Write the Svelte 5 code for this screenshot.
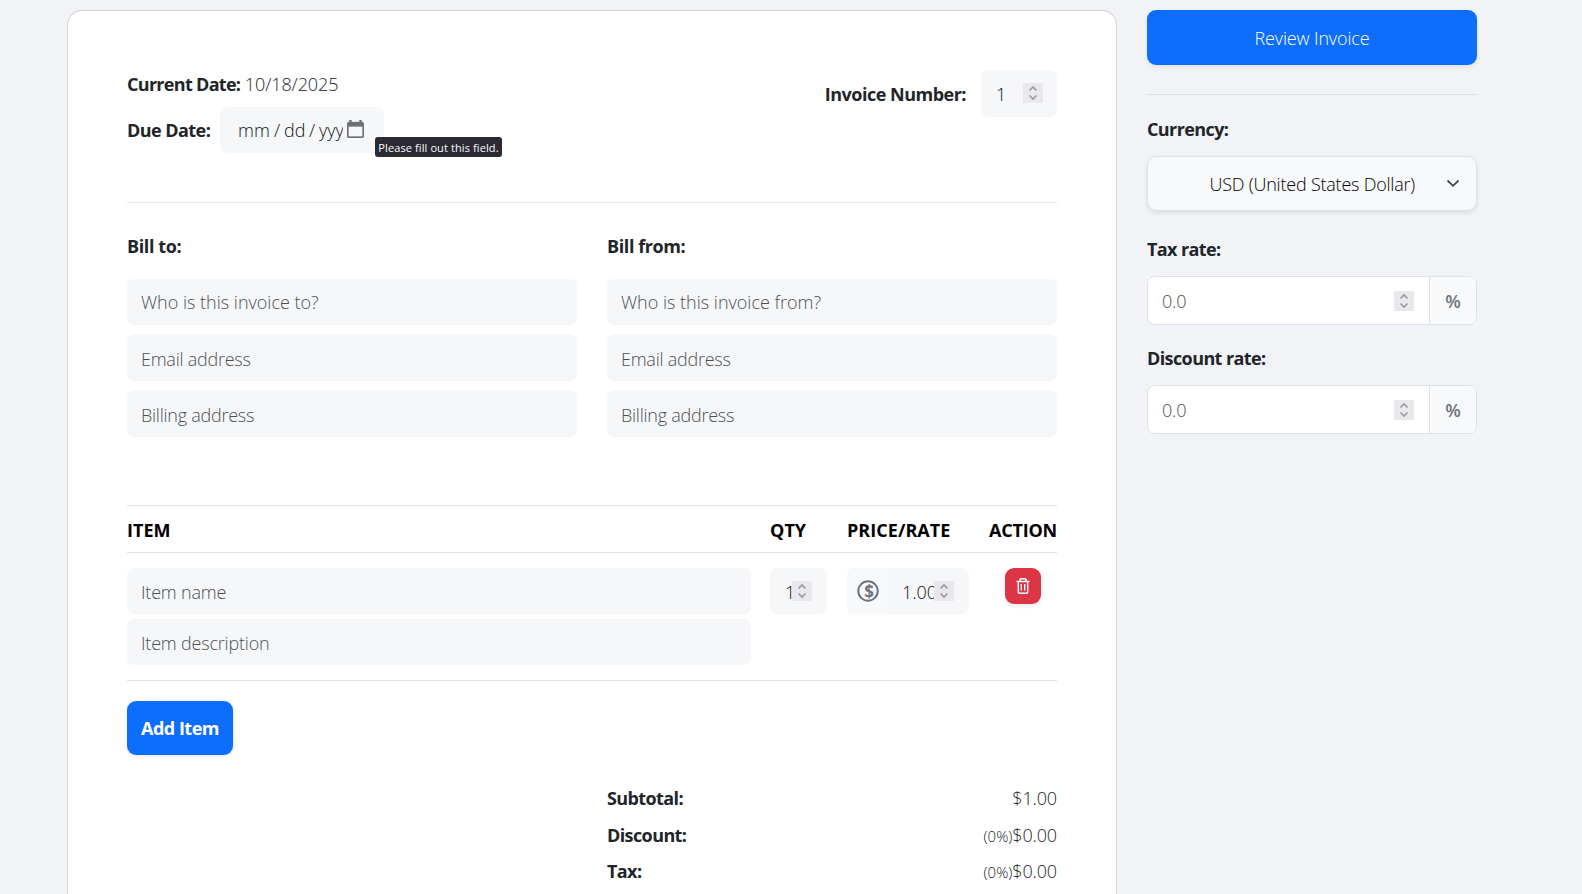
<script lang="ts">
	const parties = [
		{ title: 'Bill to:', name: 'Who is this invoice to?', key: 'to' },
		{ title: 'Bill from:', name: 'Who is this invoice from?', key: 'from' }
	];

	const rates = ['Tax rate:', 'Discount rate:'];

	let invoiceNumber = $state('1');
	let quantity = $state('1');
	let price = $state('1.00');

	const subtotal = $derived((parseFloat(quantity) || 0) * (parseFloat(price) || 0));
	const totals = $derived([
		{ label: 'Subtotal:', rate: '', value: '$' + subtotal.toFixed(2) },
		{ label: 'Discount:', rate: '(0%)', value: '$0.00' },
		{ label: 'Tax:', rate: '(0%)', value: '$0.00' }
	]);
</script>

{#snippet spinner()}
	<svg class="spinner" width="20" height="20" viewBox="0 0 20 20">
		<path d="M6.500 7.500 10 4l3.500 3.500M6.500 12.500 10 16l3.500-3.500" />
	</svg>
{/snippet}

<div class="page">
	<form class="card">
		<div class="top">
			<div>
				<div class="currentDate"><b>Current Date:</b> <span>10/18/2025</span></div>
				<div class="dueDate">
					<b>Due Date:</b>
					<div class="dateBox">
						<div class="dateText"><span class="mm">mm</span><span class="slash">/</span><span class="dd">dd</span><span class="slash">/</span><span class="yy">yyyy</span></div>
						<svg class="calendar" width="17" height="18" viewBox="0 0 17 18">
							<path d="M2.500 0h2v2h8V0h2v2h.5a2 2 0 0 1 2 2v12a2 2 0 0 1-2 2H2a2 2 0 0 1-2-2V4a2 2 0 0 1 2-2h.5zM1.500 6.500v9a1 1 0 0 0 1 1h12a1 1 0 0 0 1-1v-9z" />
						</svg>
						<div class="tooltip">Please fill out this field.</div>
					</div>
				</div>
			</div>
			<div class="invoiceNumber">
				<b>Invoice Number:</b>
				<div class="field numberBox"><input bind:value={invoiceNumber} aria-label="Invoice number" />{@render spinner()}</div>
			</div>
		</div>

		<hr />

		<div class="parties">
			{#each parties as party (party.key)}
				<div class="party">
					<b>{party.title}</b>
					<input class="field" placeholder={party.name} />
					<input class="field tall" placeholder="Email address" />
					<input class="field tall" placeholder="Billing address" />
				</div>
			{/each}
		</div>

		<div class="items">
			<div class="itemGrid itemHead">
				<b class="wide">ITEM</b>
				<b class="wide">QTY</b>
				<b class="wide">PRICE/RATE</b>
				<b>ACTION</b>
			</div>
			<div class="itemGrid itemRow">
				<div class="itemText">
					<input class="field" placeholder="Item name" />
					<input class="field" placeholder="Item description" />
				</div>
				<div class="field qtyBox"><input bind:value={quantity} aria-label="Quantity" />{@render spinner()}</div>
				<div class="field priceBox">
					<div class="prefix">
						<svg width="22" height="22" viewBox="0 0 22 22">
							<circle cx="11" cy="11" r="9.700" />
							<text x="12" y="18">$</text>
						</svg>
					</div>
					<input bind:value={price} aria-label="Price" />{@render spinner()}
				</div>
				<button type="button" class="trash" aria-label="Delete item">
					<svg width="14" height="16" viewBox="0 0 14 16">
						<path d="M.5 3.500h13M4 3.200V1.600Q4 .8 4.800.8h4.400q.8 0 .8.8v1.600M2.300 4v10.200q0 1 1 1h7.400q1 0 1-1V4M5.300 6v6.500M8.700 6v6.500" />
					</svg>
				</button>
			</div>
		</div>

		<button type="button" class="add">Add Item</button>

		<div class="totals">
			{#each totals as total (total.label)}
				<div class="total">
					<b>{total.label}</b>
					<span><small>{total.rate}</small>{total.value}</span>
				</div>
			{/each}
		</div>
	</form>

	<aside>
		<button type="button" class="review">Review Invoice</button>
		<hr />
		<b class="currency">Currency:</b>
		<button type="button" class="select">
			<span>USD (United States Dollar)</span>
			<svg width="14" height="9" viewBox="0 0 14 9"><path d="M1.500 1.500 7 6.800l5.500-5.300" /></svg>
		</button>
		{#each rates as rate (rate)}
			<b class="rateLabel">{rate}</b>
			<div class="rateBox">
				<input placeholder="0.0" aria-label={rate} />{@render spinner()}
				<span class="percent">%</span>
			</div>
		{/each}
	</aside>
</div>

<style>
	:global(body) {
		margin: 0;
		background: #f1f3f7;
	}

	.page {
		display: flex;
		gap: 30px;
		height: 894px;
		padding: 10px 0 0 67px;
		box-sizing: border-box;
		overflow: hidden;
		font-family: "Open Sans", "Noto Sans", sans-serif;
		font-size: 18px;
		font-weight: 300;
		line-height: 27px;
		color: #212529;
	}

	.page * {
		box-sizing: border-box;
	}

	b {
		font-weight: 700;
		letter-spacing: -0.6px;
		white-space: nowrap;
	}

	hr {
		margin: 0;
		border: 0;
		border-top: 1px solid #e4e5e7;
	}

	input {
		min-width: 0;
		border: 0;
		outline: 0;
		background: transparent;
		font: inherit;
		color: #111417;
	}

	input::placeholder {
		color: #4d5053;
		opacity: 1;
	}

	button {
		border: 0;
		font: inherit;
	}

	.card {
		width: 1050px;
		height: 884px;
		flex: none;
		padding: 59px 59px 0;
		border: 1px solid #d0d1d5;
		border-bottom: 0;
		border-radius: 15px 15px 0 0;
		background: #fff;
	}

	.top {
		display: flex;
		justify-content: space-between;
		height: 132px;
	}

	.currentDate {
		margin-top: 1px;
		letter-spacing: -0.1px;
	}

	.currentDate b {
		letter-spacing: -0.7px;
	}

	.dueDate {
		display: flex;
		align-items: center;
		gap: 9px;
		margin-top: 9px;
	}

	.dueDate b {
		width: 84px;
		letter-spacing: -0.55px;
	}

	.dateBox {
		position: relative;
		display: flex;
		align-items: center;
		width: 164px;
		height: 46px;
		padding-left: 18px;
		border-radius: 7px;
		background: #f6f7f9;
	}

	.dateText {
		display: flex;
		width: 105px;
		overflow: hidden;
		color: #111417;
	}

	.dateText span {
		flex: none;
	}

	.mm {
		width: 36px;
	}

	.slash {
		width: 10px;
	}

	.dd {
		width: 25px;
	}

	.calendar {
		margin: -3px 0 0 4px;
		fill: #6c7075;
		fill-rule: evenodd;
	}

	.calendar path {
		stroke: #6c7075;
		stroke-width: 0.3;
	}

	.tooltip {
		position: absolute;
		left: 155px;
		top: 30px;
		width: 127px;
		height: 20px;
		border-radius: 3px;
		background: #2b2a33;
		color: #fbfbfe;
		font-size: 11px;
		font-weight: 400;
		letter-spacing: 0.1px;
		line-height: 21px;
		text-align: center;
		white-space: nowrap;
	}

	.invoiceNumber {
		display: flex;
		align-items: center;
		gap: 15px;
		height: 47px;
	}

	.invoiceNumber b {
		padding-top: 2px;
		letter-spacing: -0.5px;
	}

	.field {
		display: flex;
		align-items: center;
		width: 100%;
		height: 46px;
		padding: 0 14px;
		border-radius: 7px;
		background: #f6f7f9;
	}

	.tall {
		height: 47px;
		padding-top: 2px;
		letter-spacing: -0.25px;
	}

	.spinner {
		flex: none;
		background: #e9e9ed;
		fill: none;
		stroke: #9a99a5;
		stroke-width: 1.7;
	}

	.numberBox {
		width: 76px;
		height: 47px;
		padding: 0 14px 2px 15px;
	}

	.numberBox input {
		width: 27px;
		padding: 4px 0 0;
	}

	.parties {
		display: grid;
		grid-template-columns: 450px 450px;
		gap: 30px;
		padding-top: 30px;
	}

	.party {
		display: flex;
		flex-direction: column;
		gap: 9px;
	}

	.party b {
		margin-bottom: 10px;
		letter-spacing: -0.4px;
	}

	.items {
		margin-top: 68px;
		border-top: 1px solid #dfe1e4;
		border-bottom: 1px solid #dfe1e4;
	}

	.itemGrid {
		display: grid;
		grid-template-columns: 624px 58px 123px 68px;
		column-gap: 19px;
	}

	.itemHead {
		height: 47px;
		padding-top: 11px;
		border-bottom: 1px solid #dfe1e4;
		color: #000;
	}

	.itemHead b {
		letter-spacing: -0.2px;
	}

	.itemHead .wide {
		letter-spacing: 0.05px;
	}

	.itemRow {
		height: 127px;
		padding-top: 15px;
	}

	.itemText {
		display: flex;
		flex-direction: column;
		gap: 5px;
	}

	.itemText .field {
		padding-top: 2px;
		letter-spacing: -0.2px;
	}

	.qtyBox {
		width: 57px;
		padding: 0 15px;
	}

	.qtyBox input {
		width: 6px;
		flex: 1;
		padding: 3px 0 0;
	}

	.priceBox {
		width: 122px;
		padding: 0 15px 0 0;
	}

	.prefix {
		display: flex;
		align-items: center;
		justify-content: center;
		flex: none;
		width: 40px;
		height: 46px;
		padding-left: 1px;
		border-radius: 7px 0 0 7px;
		background: #f8f9fb;
	}

	.prefix circle {
		fill: none;
		stroke: #6c757d;
		stroke-width: 2;
	}

	.prefix text {
		fill: #6c757d;
		font-size: 17px;
		font-weight: 700;
		text-anchor: middle;
	}

	.priceBox input {
		width: 47px;
		flex: 1;
		padding: 3px 0 0 15px;
	}

	.trash {
		display: flex;
		align-items: center;
		justify-content: center;
		justify-self: center;
		width: 36px;
		height: 36px;
		padding: 0;
		border-radius: 9px;
		background: #dc3545;
		box-shadow: 0 2px 4px rgba(0, 0, 0, 0.08);
	}

	.trash path {
		fill: none;
		stroke: #fff;
		stroke-width: 1.4;
	}

	.add {
		display: block;
		width: 106px;
		height: 54px;
		margin-top: 20px;
		padding: 0;
		border-radius: 9px;
		background: #0d6efd;
		box-shadow: 0 2px 4px rgba(0, 0, 0, 0.08);
		color: #fff;
		font-weight: 700;
		letter-spacing: -0.5px;
	}

	.totals {
		width: 450px;
		margin: 30px 0 0 auto;
		letter-spacing: -0.15px;
	}

	.total {
		display: flex;
		justify-content: space-between;
		height: 36.500px;
	}

	small {
		font-size: 15px;
		letter-spacing: 0;
	}

	aside {
		display: flex;
		flex-direction: column;
		width: 330px;
	}

	.review {
		height: 55px;
		margin-bottom: 29px;
		padding: 2px 0 0;
		border-radius: 9px;
		background: #0d6efd;
		box-shadow: 0 2px 4px rgba(0, 0, 0, 0.08);
		color: #fff;
		letter-spacing: -0.15px;
	}

	aside hr {
		border-color: #dcdee1;
	}

	.currency {
		margin: 21px 0 13px;
	}

	.select {
		display: flex;
		align-items: center;
		justify-content: flex-end;
		gap: 31px;
		height: 55px;
		padding: 0 16px 0 0;
		border: 1px solid #dee0e3;
		border-radius: 9px;
		background: #f8f9fb;
		box-shadow: 0 2px 4px rgba(0, 0, 0, 0.08);
		color: #000;
		letter-spacing: -0.22px;
	}

	.select span {
		padding-top: 2px;
	}

	.select path {
		fill: none;
		stroke: #42474c;
		stroke-width: 1.8;
	}

	.rateLabel {
		margin: 25px 0 13px;
	}

	.rateBox {
		display: flex;
		align-items: center;
		height: 49px;
		border: 1px solid #dee2e6;
		border-radius: 8px;
		background: #fff;
		overflow: hidden;
	}

	.rateBox + .rateLabel {
		margin-top: 20px;
	}

	.rateBox input {
		flex: 1;
		padding: 2px 0 0 14px;
		letter-spacing: -0.2px;
	}

	.percent {
		width: 47px;
		height: 47px;
		margin-left: 15px;
		border-left: 1px solid #dee2e6;
		background: #f8f9fb;
		color: #6c757d;
		font-weight: 600;
		line-height: 49px;
		text-align: center;
	}
</style>
